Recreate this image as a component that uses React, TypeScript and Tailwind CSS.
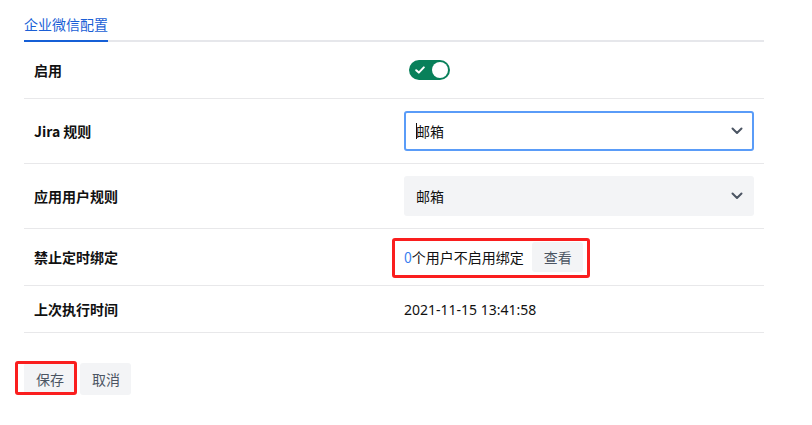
import { ReactNode } from "react";

const font = { fontFamily: '"Noto Sans CJK SC", "Noto Sans", sans-serif' };

function Chevron() {
  return (
    <svg width="12" height="8" viewBox="0 0 12 8" className="text-[#4b5563]">
      <path d="M1.5 1.5 L6 6 L10.5 1.5" fill="none" stroke="currentColor" strokeWidth="2" strokeLinecap="round" strokeLinejoin="round" />
    </svg>
  );
}

function Row({ label, h, children }: { label: string; h: string; children: ReactNode }) {
  return (
    <div className={`grid grid-cols-2 items-center border-b border-[#e8e8ea] ${h}`}>
      <div className="px-[10px] text-[14px] font-bold text-[#111]">{label}</div>
      <div className="px-[10px] text-[14px] text-[#111]">{children}</div>
    </div>
  );
}

export default function App() {
  return (
    <div className="w-[812px] h-[425px] bg-white" style={font}>
      <div className="ml-6 w-[740px] pt-[14px]">
        <div className="flex border-b-2 border-[#e6e7eb]">
          <div className="-mb-[2px] border-b-2 border-[#155fd6] pb-[6px] text-[14px] leading-[20px] text-[#1a5fd6]">企业微信配置</div>
        </div>

        <Row label="启用" h="h-[57px]">
          <button type="button" className="ml-[5px] flex h-[20px] w-[41px] items-center justify-between rounded-full bg-[#08805a] pl-[6px] pr-[2px]">
            <svg width="10" height="8" viewBox="0 0 10 8">
              <path d="M1.2 4.2 L3.8 6.6 L8.8 1.4" fill="none" stroke="white" strokeWidth="2" strokeLinecap="round" strokeLinejoin="round" />
            </svg>
            <span className="h-[16px] w-[16px] rounded-full bg-white" />
          </button>
        </Row>

        <Row label="Jira 规则" h="h-[65px]">
          <div className="flex h-[40px] items-center justify-between rounded-[3px] border-2 border-[#5a9cf8] bg-white pl-[10px] pr-[9px]">
            <span className="flex items-center">
              <span className="h-[16px] w-px bg-[#111]" />
              <span className="-ml-px">邮箱</span>
            </span>
            <Chevron />
          </div>
        </Row>

        <Row label="应用用户规则" h="h-[65px]">
          <div className="flex h-[40px] items-center justify-between rounded-[3px] bg-[#f3f4f6] pl-[12px] pr-[11px]">
            <span>邮箱</span>
            <Chevron />
          </div>
        </Row>

        <Row label="禁止定时绑定" h="h-[57px]">
          <div className="relative flex items-center">
            <span>
              <span className="text-[#3b7ff0]">0</span>个用户不启用绑定
            </span>
            <button type="button" className="ml-[8px] h-[30px] rounded-[3px] bg-[#f3f4f6] pl-[12px] pr-[11px] text-[#4b5563]">查看</button>
            <div className="absolute -left-[12px] -top-[4px] h-[40px] w-[198px] rounded-[3px] border-[3px] border-[#fa1e1e]" />
          </div>
        </Row>

        <Row label="上次执行时间" h="h-[47px]">
          <span className="font-['Noto_Sans','Noto_Sans_CJK_SC',sans-serif]">2021-11-15 13:41:58</span>
        </Row>

        <div className="mt-[30px] flex gap-[4px] text-[14px] text-[#4b5563]">
          <div className="relative">
            <button type="button" className="h-[32px] rounded-[3px] bg-[#f3f4f6] px-[12px]">保存</button>
            <div className="absolute -left-[9px] -top-[2px] h-[34px] w-[62px] rounded-[3px] border-[3px] border-[#fa1e1e]" />
          </div>
          <button type="button" className="h-[32px] rounded-[3px] bg-[#f3f4f6] pl-[12px] pr-[11px]">取消</button>
        </div>
      </div>
    </div>
  );
}
